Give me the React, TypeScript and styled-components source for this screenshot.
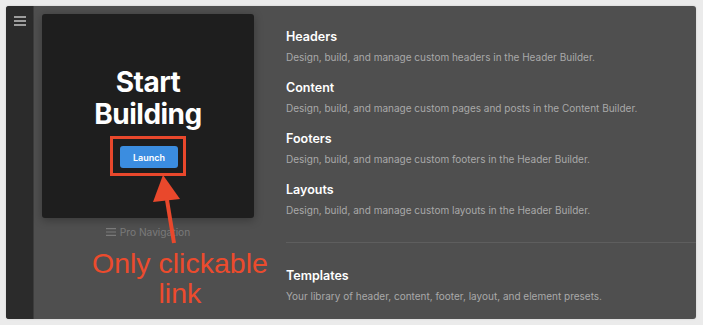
import { createGlobalStyle, styled } from 'styled-components'

const GlobalStyle = createGlobalStyle`
    body {
        margin: 0;
        background: #ebebeb;
        font-family: Inter, 'Noto Sans', sans-serif;
    }
`

const sections = [
    { title: 'Headers', text: 'Design, build, and manage custom headers in the Header Builder.' },
    { title: 'Content', text: 'Design, build, and manage custom pages and posts in the Content Builder.' },
    { title: 'Footers', text: 'Design, build, and manage custom footers in the Header Builder.' },
    { title: 'Layouts', text: 'Design, build, and manage custom layouts in the Header Builder.' },
]

const Burger = ({ size, color }: { size: number; color: string }) => (
    <svg width={size} height={size} viewBox="0 0 12 12" fill="none">
        <path d="M0 2h12M0 6h12M0 10h12" stroke={color} strokeWidth="1.4" />
    </svg>
)

export default function App() {
    return (
        <>
            <GlobalStyle />
            <Window>
                <Sidebar>
                    <Burger size={12} color="#c4c4c4" />
                </Sidebar>
                <Main>
                    <LeftCol>
                        <Card>
                            <Headline>
                                Start
                                <br />
                                Building
                            </Headline>
                            <Highlight>
                                <LaunchButton>Launch</LaunchButton>
                            </Highlight>
                        </Card>
                        <Caption>
                            <Burger size={10} color="#7a7a7a" />
                            Pro Navigation
                        </Caption>
                        <Note>
                            Only clickable
                            <br />
                            link
                        </Note>
                        <Arrow width="45" height="80" viewBox="0 0 45 80">
                            <path d="M25 31L32 74" stroke="#e9482c" strokeWidth="4" />
                            <path d="M21 6L11 33L38 30Z" fill="#e9482c" />
                        </Arrow>
                    </LeftCol>
                    <RightCol>
                        <List>
                            {sections.map((s) => (
                                <Item key={s.title}>
                                    <Title>{s.title}</Title>
                                    <Desc>{s.text}</Desc>
                                </Item>
                            ))}
                        </List>
                        <Divider />
                        <Item>
                            <Title>Templates</Title>
                            <Desc>Your library of header, content, footer, layout, and element presets.</Desc>
                        </Item>
                    </RightCol>
                </Main>
            </Window>
        </>
    )
}

const Window = styled.div`
    margin: 6px;
    width: 690px;
    height: 313px;
    display: flex;
    background: #4f4f4f;
    border-radius: 3px;
    overflow: hidden;
    box-shadow: 0 0 2px rgba(0, 0, 0, 0.15);
`

const Sidebar = styled.aside`
    width: 28px;
    flex-shrink: 0;
    background: #2b2b2b;
    border-right: 1px solid #3c3c3c;
    display: flex;
    justify-content: center;
    padding-top: 9px;
    box-sizing: border-box;
`

const Main = styled.div`
    flex: 1;
    display: flex;
    padding: 8px 0 0 8px;
`

const LeftCol = styled.div`
    position: relative;
    width: 212px;
    flex-shrink: 0;
    display: flex;
    flex-direction: column;
`

const Card = styled.div`
    height: 204px;
    background: #1e1e1e;
    border-radius: 3px;
    box-shadow: 0 2px 10px rgba(0, 0, 0, 0.3);
    display: flex;
    flex-direction: column;
    align-items: center;
    justify-content: center;
    padding-top: 10px;
    box-sizing: border-box;
`

const Headline = styled.h1`
    margin: 0;
    color: #fff;
    font-size: 28px;
    line-height: 32px;
    font-weight: 700;
    text-align: center;
    letter-spacing: -0.5px;
`

const Highlight = styled.div`
    margin-top: 6px;
    border: 3px solid #e9482c;
    padding: 6px 5px 5px 7px;
`

const LaunchButton = styled.button`
    width: 58px;
    height: 22px;
    border: none;
    border-radius: 3px;
    background: #3b8de0;
    color: #fff;
    font-family: Inter, sans-serif;
    font-size: 9px;
    font-weight: 600;
    padding: 0;
`

const Caption = styled.div`
    margin-top: 7px;
    display: flex;
    align-items: center;
    justify-content: center;
    gap: 4px;
    color: #7a7a7a;
    font-size: 10.2px;
    line-height: 14px;
`

const Note = styled.div`
    margin: 9px 0 0 50px;
    align-self: flex-start;
    white-space: nowrap;
    text-align: center;
    color: #ec4b2d;
    font-family: 'Liberation Sans', Arial, sans-serif;
    font-size: 28.5px;
    line-height: 30px;
`

const Arrow = styled.svg`
    position: absolute;
    left: 100px;
    top: 155px;
    pointer-events: none;
`

const RightCol = styled.div`
    flex: 1;
    margin-left: 32px;
    padding-top: 15px;
    display: flex;
    flex-direction: column;
`

const List = styled.div`
    display: flex;
    flex-direction: column;
    gap: 16px;
`

const Item = styled.div`
    display: flex;
    flex-direction: column;
    gap: 5px;
`

const Title = styled.h3`
    margin: 0;
    color: #fff;
    font-size: 12.5px;
    line-height: 16px;
    font-weight: 600;
`

const Desc = styled.p`
    margin: 0;
    color: #a9a9a9;
    font-size: 10px;
    line-height: 14px;
    white-space: nowrap;
`

const Divider = styled.hr`
    margin: 25px 0;
    border: none;
    height: 1px;
    background: #5e5e5e;
`
